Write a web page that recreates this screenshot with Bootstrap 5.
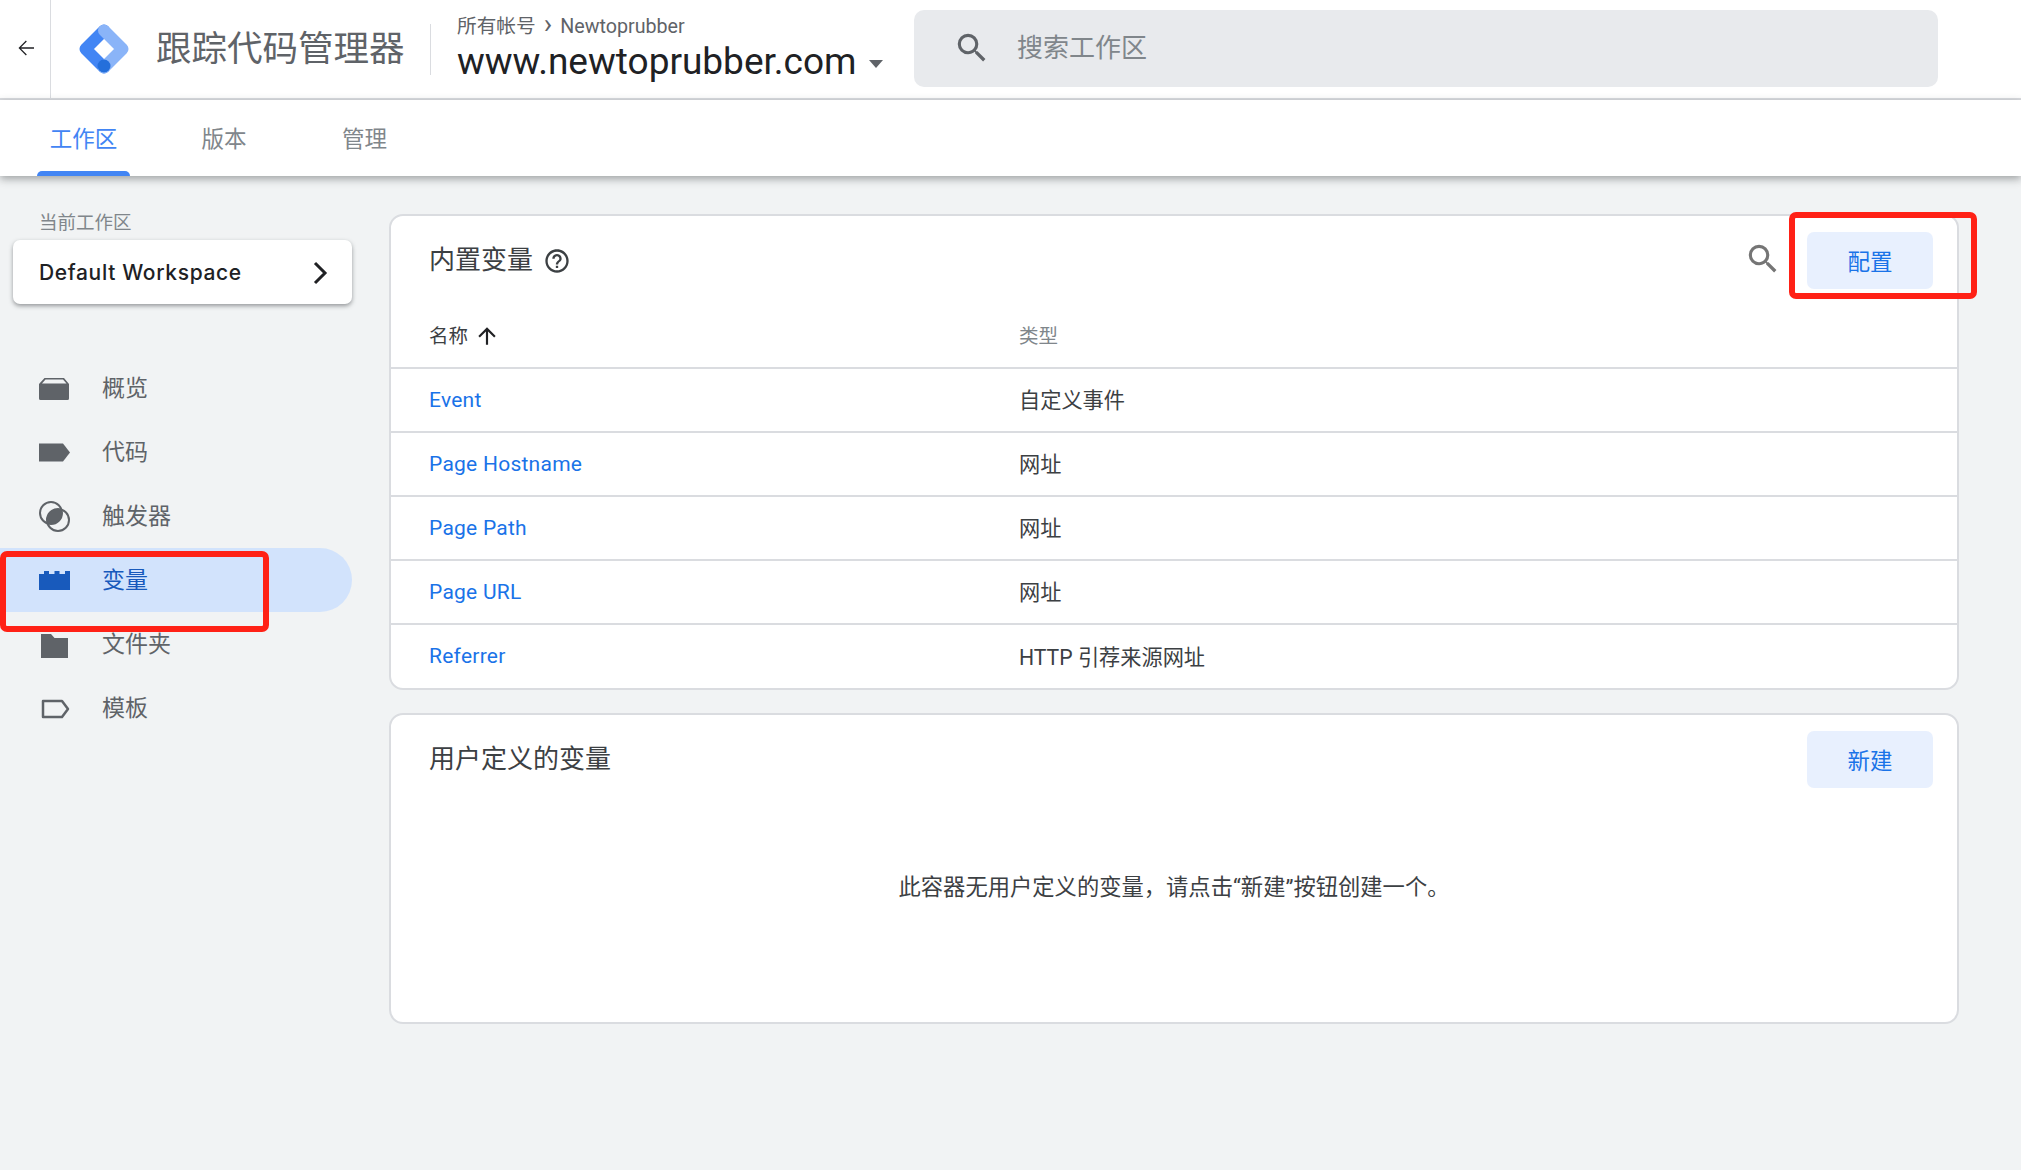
<!DOCTYPE html>
<html lang="zh-CN">
  <head>
    <meta charset="UTF-8" />
    <meta name="viewport" content="width=device-width, initial-scale=1.0" />
    <title>跟踪代码管理器</title>
    <link href="https://cdn.jsdelivr.net/npm/bootstrap@5.3.0/dist/css/bootstrap.min.css" rel="stylesheet" />
    <style>
      html, body { height: 100%; }
      body {
        background: #f1f3f4;
        font-family: Roboto, "Noto Sans CJK SC", sans-serif;
        color: #3c4043;
        overflow: hidden;
        position: relative;
      }
      .top-bar { height: 100px; background: #fff; border-bottom: 2px solid #dadce0; }
      .back-cell { width: 51px; height: 100%; border-right: 1px solid #dadce0; }
      .back-cell svg { margin: -2px 0 0 1px; }
      .gtm-logo { margin-left: 28px; margin-right: 27px; }
      .gtm-title { font-size: 35.5px; color: #5f6368; line-height: 1; width: 274px; padding-top: 2px; }
      .crumb-wrap { border-left: 1px solid #dadce0; height: 51px; width: 484px; padding-left: 26px; }
      .crumb-line { font-size: 19.7px; color: #5f6368; line-height: 24px; margin-top: -9px; }
      .crumb-sep { font-size: 28px; line-height: 0; margin: 0 8px 0 8px; }
      .domain-line { font-size: 37px; color: #202124; line-height: 44px; margin-top: 1px; white-space: nowrap; }
      .domain-caret { display: inline-block; border: 7px solid transparent; border-top: 8px solid #5f6368; border-bottom: 0; margin-left: 12px; vertical-align: middle; }
      .search-box { width: 1024px; height: 77px; margin-bottom: 2px; background: #e8eaed; border-radius: 10px; padding-left: 39px; gap: 26px; color: #80868b; font-size: 26px; }
      .tab-bar { height: 76px; background: #fff; box-shadow: 0 3px 8px rgba(60, 64, 67, .45); position: relative; z-index: 1; }
      .tab-item { font-size: 22.5px; color: #80868b; position: relative; width: 93px; text-align: center; margin-right: 47.5px; line-height: 78px; }
      .tab-item.on { color: #4285f4; margin-left: 37px; }
      .tab-item.on::after { content: ""; position: absolute; left: 0; right: 0; bottom: 0; height: 5px; background: #4285f4; border-radius: 5px 5px 0 0; }
      .side-col { width: 352px; flex: none; padding-top: 36px; }
      .side-label { font-size: 18.5px; color: #80868b; padding-left: 39px; line-height: 22px; }
      .ws-card { margin: 6px 0 0 13px; height: 64px; background: #fff; border-radius: 7px; box-shadow: 0 2px 4px rgba(60, 64, 67, .5); padding: 1px 24px 0 26px; font-family: Inter, "Noto Sans CJK SC", sans-serif; font-size: 21px; font-weight: 500; color: #202124; letter-spacing: .65px; }
      .side-nav { margin-top: 52px; }
      .side-item { height: 64px; padding-left: 39px; font-size: 23px; color: #5f6368; gap: 32px; }
      .side-item span { padding-top: 3px; }
      .side-item.on { background: #d2e3fc; color: #185abc; border-radius: 0 32px 32px 0; }
      .side-item svg { width: 31px; height: 31px; flex: none; }
      .main-col { margin: 38px 0 0 37px; width: 1570px; flex: none; }
      .var-card { background: #fff; border: 2px solid #dadce0; border-radius: 14px; }
      .var-card + .var-card { margin-top: 23px; }
      .var-top { height: 88px; padding-left: 38px; padding-right: 24px; }
      .var-title { font-size: 26px; color: #3c4043; line-height: 34px; }
      .help-mark { margin-left: 10px; margin-top: 2px; }
      .find-mark { margin-right: 25px; margin-top: -3px; }
      .tint-btn { width: 126px; height: 57px; background: #e8f0fe; color: #1a73e8; border: 0; border-radius: 7px; font-size: 22.5px; padding: 5px 0 0; }
      .tint-btn:hover { background: #e8f0fe; color: #1a73e8; }
      .head-row { height: 63px; padding: 0 38px; }
      .sort-col { width: 590px; flex: none; font-size: 19.5px; color: #3c4043; }
      .type-head { font-size: 19.5px; color: #80868b; padding-top: 2px; }
      .name-head { padding-top: 2px; margin-right: 2px; }
      .data-row { height: 64px; border-top: 2px solid #dadce0; padding: 2px 38px 0; font-size: 21.2px; }
      .data-row:last-child { height: 65px; }
      .data-row .sort-col { padding-bottom: 1px; }
      .data-row a { color: #1a73e8; text-decoration: none; font-size: 21px; letter-spacing: .25px; }
      .red-mark { position: absolute; border: 6px solid #ff2116; border-radius: 7px; pointer-events: none; z-index: 5; }
      .mark-nav { left: 0; top: 551px; width: 269px; height: 81px; }
      .mark-btn { left: 1789px; top: 212px; width: 188px; height: 87px; }
      .empty-note { font-size: 22.3px; color: #3c4043; text-align: center; line-height: 30px; padding: 69px 0 120px; }
    </style>
  </head>
  <body>
    <header class="top-bar d-flex align-items-center">
      <div class="back-cell d-flex align-items-center justify-content-center">
        <svg width="24" height="24" viewBox="0 0 24 24" fill="#202124"><path d="M20 11.3H7l5.8-5.8-.9-.9L4.500 12l7.400 7.400.9-.9L7 12.700h13z" /></svg>
      </div>
      <svg class="gtm-logo" width="50" height="50" viewBox="0 0 50 50">
        <path d="M25 6.500 6.500 25 25 43.500" fill="none" stroke="#4285f4" stroke-width="12" stroke-linecap="round" stroke-linejoin="round" />
        <path d="M25 6.500 43.500 25 25 43.500" fill="none" stroke="#8ab4f8" stroke-width="12" stroke-linecap="round" stroke-linejoin="round" />
        <circle cx="25" cy="42" r="6.500" fill="#246fdb" />
      </svg>
      <div class="gtm-title">跟踪代码管理器</div>
      <div class="crumb-wrap">
        <div class="crumb-line">所有帐号<span class="crumb-sep">›</span>Newtoprubber</div>
        <div class="domain-line">www.newtoprubber.com<span class="domain-caret"></span></div>
      </div>
      <div class="search-box d-flex align-items-center">
        <svg width="38" height="38" viewBox="0 0 24 24" fill="#5f6368"><path d="M15.500 14h-.79l-.28-.27A6.470 6.470 0 0 0 16 9.500 6.500 6.500 0 1 0 9.500 16c1.610 0 3.090-.59 4.230-1.570l.27.28v.79l5 4.990L20.490 19l-4.990-5zm-6 0C7.010 14 5 11.990 5 9.500S7.010 5 9.500 5 14 7.010 14 9.500 11.990 14 9.500 14z" /></svg>
        <span>搜索工作区</span>
      </div>
    </header>
    <nav class="tab-bar d-flex">
      <div class="tab-item on">工作区</div>
      <div class="tab-item">版本</div>
      <div class="tab-item">管理</div>
    </nav>
    <div class="d-flex">
      <aside class="side-col">
        <div class="side-label">当前工作区</div>
        <div class="ws-card d-flex align-items-center justify-content-between">
          <span>Default Workspace</span>
          <svg width="16" height="24" viewBox="0 0 16 24" fill="none" stroke="#202124" stroke-width="3"><path d="M3 2l10 10L3 22" /></svg>
        </div>
        <div class="side-nav">
          <div class="side-item d-flex align-items-center">
            <svg viewBox="0 0 31 31" fill="#5f6368"><path fill-rule="evenodd" d="M5.500 5H25l5 6v14.500a1.500 1.500 0 0 1-1.500 1.500H1.500A1.500 1.500 0 0 1 0 25.500V11zM6.500 6.500 3 10.500h24.500l-3.500-4z" /></svg>
            <span>概览</span>
          </div>
          <div class="side-item d-flex align-items-center">
            <svg viewBox="0 0 31 31" fill="#5f6368"><path d="M0 6.500h24l7 9-7 9H0z" /></svg>
            <span>代码</span>
          </div>
          <div class="side-item d-flex align-items-center">
            <svg viewBox="0 0 31 31" fill="none" stroke="#5f6368" stroke-width="2"><circle cx="12" cy="12" r="11" /><circle cx="19" cy="19" r="11" /><path fill="#5f6368" stroke="none" d="M22.450 8.550A11 11 0 0 1 8.550 22.450 11 11 0 0 1 22.450 8.550z" /></svg>
            <span>触发器</span>
          </div>
          <div class="side-item on d-flex align-items-center">
            <svg viewBox="0 0 31 31" fill="#185abc"><path d="M0 9h5V6h5v3h5.500V6h5v3H26V6h5v19H0z" /></svg>
            <span>变量</span>
          </div>
          <div class="side-item d-flex align-items-center">
            <svg viewBox="0 0 31 31" fill="#5f6368"><path d="M2 5h10l3.500 4H29v20H2z" /></svg>
            <span>文件夹</span>
          </div>
          <div class="side-item d-flex align-items-center">
            <svg viewBox="0 0 31 31" fill="none" stroke="#5f6368" stroke-width="2.500"><path d="M4 8h19l6 8-6 8H4z" stroke-linejoin="round" /></svg>
            <span>模板</span>
          </div>
        </div>
      </aside>
      <main class="main-col">
        <section class="var-card">
          <div class="var-top d-flex align-items-center">
            <span class="var-title">内置变量</span>
            <svg class="help-mark" width="28" height="28" viewBox="0 0 24 24" fill="#3c4043"><path d="M11 18h2v-2h-2v2zm1-16C6.480 2 2 6.480 2 12s4.480 10 10 10 10-4.480 10-10S17.520 2 12 2zm0 18c-4.410 0-8-3.590-8-8s3.590-8 8-8 8 3.590 8 8-3.590 8-8 8zm0-14c-2.210 0-4 1.790-4 4h2c0-1.100.9-2 2-2s2 .9 2 2c0 2-3 1.750-3 5h2c0-2.250 3-2.500 3-5 0-2.210-1.790-4-4-4z" /></svg>
            <svg class="find-mark ms-auto" width="38" height="38" viewBox="0 0 24 24" fill="#757575"><path d="M15.500 14h-.79l-.28-.27A6.470 6.470 0 0 0 16 9.500 6.500 6.500 0 1 0 9.500 16c1.610 0 3.090-.59 4.230-1.570l.27.28v.79l5 4.990L20.490 19l-4.990-5zm-6 0C7.010 14 5 11.990 5 9.500S7.010 5 9.500 5 14 7.010 14 9.500 11.990 14 9.500 14z" /></svg>
            <button class="btn tint-btn" type="button">配置</button>
          </div>
          <div class="head-row d-flex align-items-center">
            <div class="sort-col d-flex align-items-center gap-1">
              <span class="name-head">名称</span>
              <svg width="26" height="26" viewBox="0 0 24 24" fill="#202124"><path d="M4 12l1.400 1.400L11 7.800V20h2V7.800l5.600 5.600L20 12l-8-8z" /></svg>
            </div>
            <div class="type-head">类型</div>
          </div>
          <div class="data-row d-flex align-items-center"><div class="sort-col"><a href="#">Event</a></div><div>自定义事件</div></div>
          <div class="data-row d-flex align-items-center"><div class="sort-col"><a href="#">Page Hostname</a></div><div>网址</div></div>
          <div class="data-row d-flex align-items-center"><div class="sort-col"><a href="#">Page Path</a></div><div>网址</div></div>
          <div class="data-row d-flex align-items-center"><div class="sort-col"><a href="#">Page URL</a></div><div>网址</div></div>
          <div class="data-row d-flex align-items-center"><div class="sort-col"><a href="#">Referrer</a></div><div>HTTP 引荐来源网址</div></div>
        </section>
        <section class="var-card">
          <div class="var-top d-flex align-items-center">
            <span class="var-title">用户定义的变量</span>
            <button class="btn tint-btn ms-auto" type="button">新建</button>
          </div>
          <div class="empty-note">此容器无用户定义的变量，请点击“新建”按钮创建一个。</div>
        </section>
      </main>
    </div>
    <div class="red-mark mark-nav"></div>
    <div class="red-mark mark-btn"></div>
  </body>
</html>
